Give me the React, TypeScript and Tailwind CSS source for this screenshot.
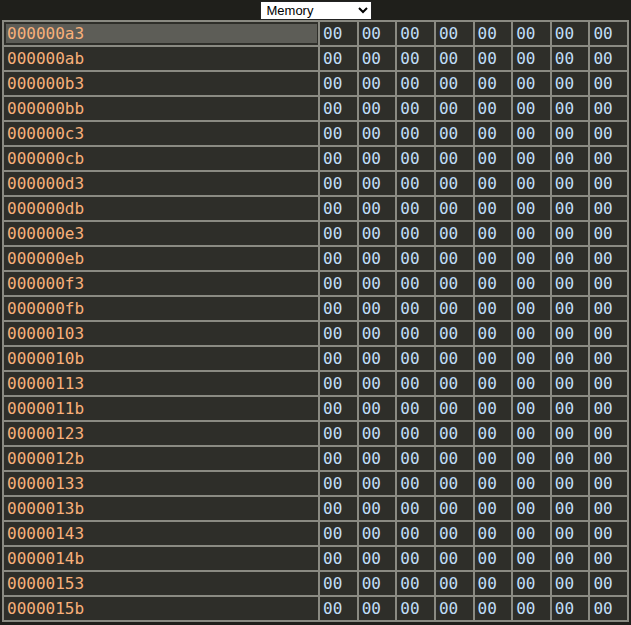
import React from "react";

const rows: string[] = [];
for (let i = 0; i < 24; i++) {
  rows.push((0xa3 + i * 8).toString(16).padStart(8, "0"));
}

export default function App() {
  return (
    <div className="w-[631px] h-[625px] bg-[#1f1f1b] overflow-hidden" style={{ fontFamily: "'DejaVu Sans Mono', monospace" }}>
      <div className="flex justify-center pt-[1px] h-[20px]">
        <select
          defaultValue="Memory"
          className="w-[112px] h-[19px] bg-white text-black border border-[#222] text-[13px] leading-none pl-[2px]"
          style={{ fontFamily: "'Liberation Sans', Arial, sans-serif" }}
        >
          <option>Memory</option>
          <option>Registers</option>
        </select>
      </div>
      <div className="mx-[2px] bg-[#8a8a82] p-[2px] grid grid-cols-[314px_repeat(8,1fr)] gap-[2px] text-[16px]">
        {rows.map((addr, r) => (
          <React.Fragment key={addr}>
            <div className="bg-[#2e2e29] h-[23px] flex items-stretch">
              {r === 0 ? (
                <div className="flex-1 ml-[2px] mr-[1px] my-[2px] bg-[#5d5d57] flex items-center pl-[1px] text-[#f8b07a]">
                  {addr}
                </div>
              ) : (
                <div className="flex items-center pl-[3px] text-[#f8b07a]">{addr}</div>
              )}
            </div>
            {Array.from({ length: 8 }).map((_, c) => (
              <div key={c} className="bg-[#2e2e29] h-[23px] flex items-center pl-[3px] text-[#c0def8]">
                00
              </div>
            ))}
          </React.Fragment>
        ))}
      </div>
    </div>
  );
}
